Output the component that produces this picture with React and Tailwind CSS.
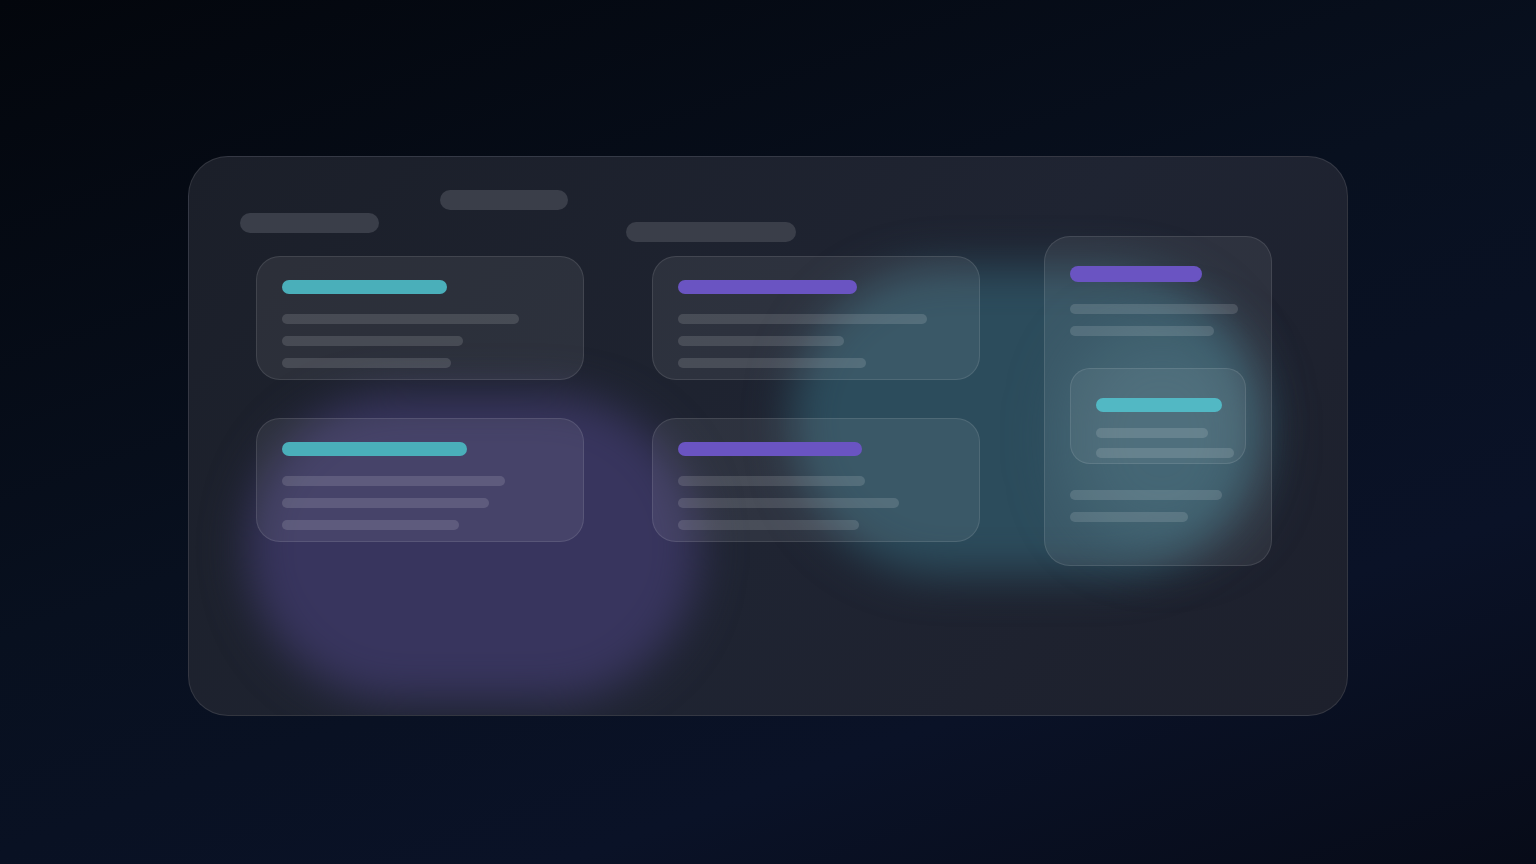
import React from "react";

function Line({ w, tone = "bg-white/[0.13]" }) {
  return <div className={`h-[10px] rounded-full ${tone}`} style={{ width: w }} />;
}

function Card({ accent, accentW, lines }) {
  return (
    <div className="h-[124px] rounded-[24px] border border-white/10 bg-white/[0.07] pl-[25px] pt-[23px]">
      <div className={`h-[14px] rounded-full ${accent}`} style={{ width: accentW }} />
      <div className="mt-[20px] flex flex-col gap-[12px]">
        {lines.map((w, i) => (
          <Line key={i} w={w} />
        ))}
      </div>
    </div>
  );
}

const teal = "bg-[#4aafba]";
const purple = "bg-[#6a54c2]";

export default function App() {
  return (
    <div className="min-h-screen w-full pt-[8px] bg-[linear-gradient(160deg,#03060c_0%,#08101f_45%,#0a1227_75%,#070b18_100%)] flex items-center justify-center">
      <div className="relative w-[1160px] h-[560px] rounded-[40px] border border-white/10 bg-[linear-gradient(135deg,#1b1f29_0%,#1f2432_55%,#1d202c_100%)] overflow-hidden">
        {/* glow blobs */}
        <div className="absolute left-[58px] top-[238px] w-[452px] h-[305px] rounded-full bg-[#38355e] blur-[22px]" />
        <div className="absolute left-[602px] top-[110px] w-[468px] h-[308px] rounded-full bg-[#2c4c5c] blur-[22px]" />
        <div className="absolute left-[880px] top-[170px] w-[185px] h-[220px] rounded-full bg-[#3e6674]/60 blur-[30px]" />

        <div className="relative flex pl-[51px] pt-[33px]">
          <div className="flex flex-col">
            <div className="flex h-[52px] items-start">
              <div className="mt-[23px] h-[20px] w-[139px] rounded-full bg-[#3a3e49]" />
              <div className="ml-[61px] h-[20px] w-[128px] rounded-full bg-[#3a3e49]" />
              <div className="ml-[58px] mt-[32px] h-[20px] w-[170px] rounded-full bg-[#3a3e49]" />
            </div>
            <div className="ml-[16px] mt-[14px] grid grid-cols-[328px_328px] gap-x-[68px] gap-y-[38px]">
              <Card accent={teal} accentW={165} lines={[237, 181, 169]} />
              <Card accent={purple} accentW={179} lines={[249, 166, 188]} />
              <Card accent={teal} accentW={185} lines={[223, 207, 177]} />
              <Card accent={purple} accentW={184} lines={[187, 221, 181]} />
            </div>
          </div>

          <div className="ml-[64px] mt-[46px] h-[330px] w-[228px] rounded-[26px] border border-white/10 bg-white/[0.07] pl-[25px] pt-[29px]">
            <div className={`h-[16px] w-[132px] rounded-full ${purple}`} />
            <div className="mt-[22px] flex flex-col gap-[12px]">
              <Line w={168} />
              <Line w={144} />
            </div>
            <div className="mt-[32px] h-[96px] w-[176px] rounded-[20px] border border-white/10 bg-white/[0.06] pl-[25px] pt-[29px]">
              <div className={`h-[14px] w-[126px] rounded-full bg-[#52b8c4]`} />
              <div className="mt-[16px] flex flex-col gap-[10px]">
                <Line w={112} />
                <Line w={138} />
              </div>
            </div>
            <div className="mt-[26px] flex flex-col gap-[12px]">
              <Line w={152} />
              <Line w={118} />
            </div>
          </div>
        </div>
      </div>
    </div>
  );
}
